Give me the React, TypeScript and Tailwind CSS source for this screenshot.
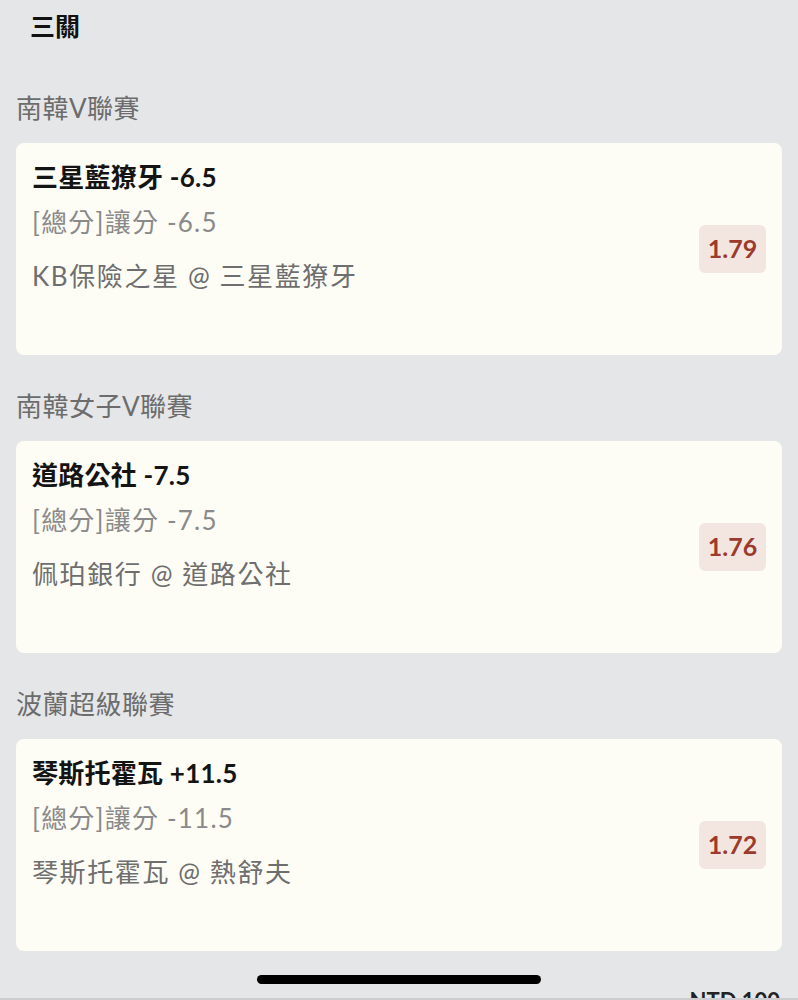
const bets = [
  {
    league: '南韓V聯賽',
    pick: '三星藍獠牙 -6.5',
    market: '[總分]讓分 -6.5',
    match: 'KB保險之星 @ 三星藍獠牙',
    odds: '1.79',
  },
  {
    league: '南韓女子V聯賽',
    pick: '道路公社 -7.5',
    market: '[總分]讓分 -7.5',
    match: '佩珀銀行 @ 道路公社',
    odds: '1.76',
  },
  {
    league: '波蘭超級聯賽',
    pick: '琴斯托霍瓦 +11.5',
    market: '[總分]讓分 -11.5',
    match: '琴斯托霍瓦 @ 熱舒夫',
    odds: '1.72',
  },
];

export default function App() {
  return (
    <div
      className="h-[1000px] overflow-hidden bg-[#e5e6e8] flex flex-col"
      style={{ fontFamily: 'Lato, "Noto Sans CJK TC", sans-serif' }}
    >
      <div className="h-[52px] flex items-center pl-[30px]">
        <h1 className="text-[25px] font-bold text-[#111] leading-none">三關</h1>
      </div>

      <div className="px-4 flex flex-col">
        {bets.map((bet, i) => (
          <div key={i} className={i === 0 ? 'pt-[38px]' : 'pt-[33px]'}>
            <div className="h-9 flex items-center text-[26px] text-[#6c6c6c] leading-none tracking-[0.5px]">
              {bet.league}
            </div>
            <div className="mt-[17px] h-[212px] bg-[#fdfdf6] rounded-lg flex items-center justify-between pl-4 pr-4">
              <div className="self-start pt-[16px]">
                <div className="h-9 flex items-center text-[26px] font-bold text-[#141414] leading-none tracking-[0.25px]">
                  {bet.pick}
                </div>
                <div className="mt-[9px] h-9 flex items-center text-[26px] text-[#8a8a8a] leading-none tracking-[1.2px]">
                  {bet.market}
                </div>
                <div className="mt-[18px] h-9 flex items-center text-[26px] text-[#6e6e6e] leading-none tracking-[1.6px]">
                  {bet.match}
                </div>
              </div>
              <div className="w-[67px] h-[48px] rounded-md bg-[#f3e6e0] flex items-center justify-center text-[25px] font-bold text-[#9c3a2d]">
                {bet.odds}
              </div>
            </div>
          </div>
        ))}
      </div>

      <div className="mt-[24px] flex justify-center">
        <div className="w-[284px] h-[9px] rounded-full bg-black" />
      </div>

      <div className="mt-[4px] h-[12px] overflow-hidden border-b-2 border-[#cdcdcf] flex justify-end pr-[18px]">
        <span className="text-[22px] font-bold text-[#222] leading-[26px]">NTD 100</span>
      </div>
    </div>
  );
}
